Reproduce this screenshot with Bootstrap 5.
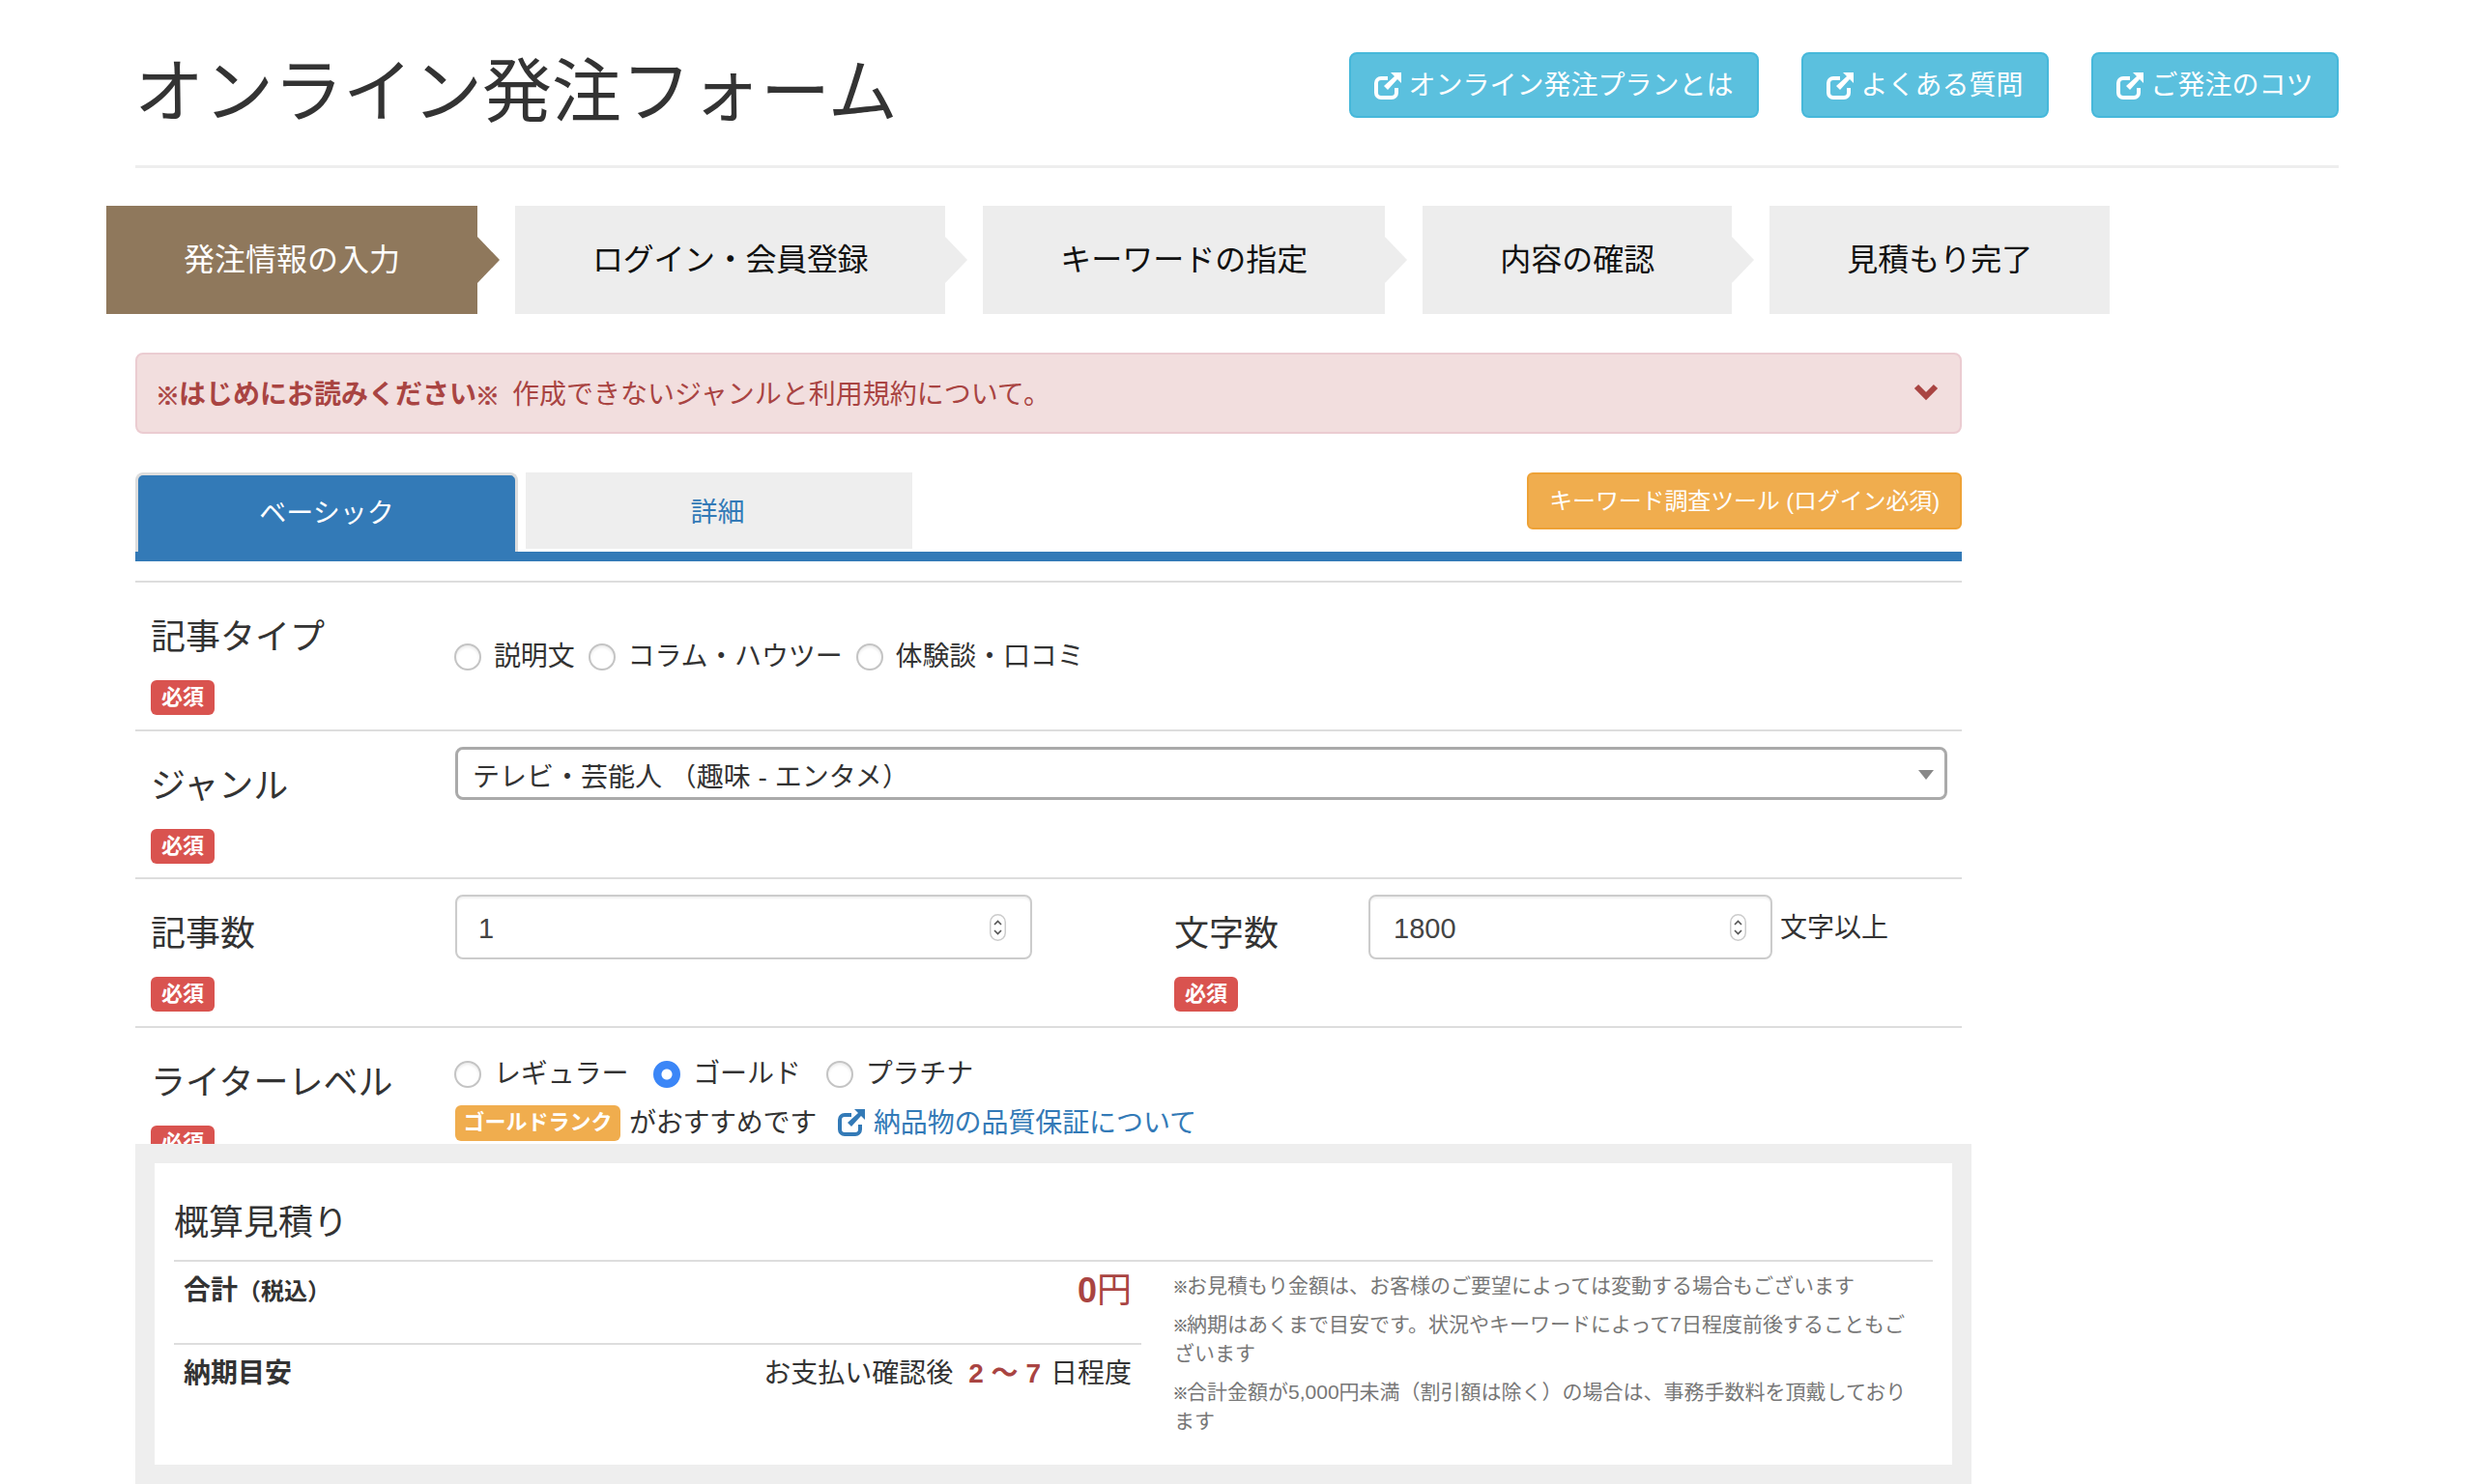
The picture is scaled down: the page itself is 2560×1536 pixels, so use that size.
<!DOCTYPE html>
<html lang="ja">
<head>
<meta charset="utf-8">
<title>オンライン発注フォーム</title>
<link rel="stylesheet" href="https://cdn.jsdelivr.net/npm/bootstrap@5.3.0/dist/css/bootstrap.min.css">
<style>
html,body{margin:0;background:#fff;}
body{font-family:"Liberation Sans","Noto Sans CJK JP",sans-serif;font-size:28px;color:#333;line-height:40px;overflow:hidden;height:1536px;}
.topzone{height:1184px;overflow:hidden;}
.wrapx{margin-left:140px;width:2280px;}
.headbar{height:174px;border-bottom:3px solid #eee;}
.ttl{font-size:72px;font-weight:400;line-height:80px;margin:49px 0 0 -1px;color:#333;letter-spacing:0;font-family:"Noto Sans CJK JP",sans-serif;}
.hbtns{margin-top:54px;gap:44px;}
.infobtn{background:#5bc0de;border:2px solid #46b8da;border-radius:8px;color:#fff;font-size:28px;height:68px;padding:2px 24.5px 0;gap:7px;line-height:1;}
.infobtn:hover{background:#5bc0de;color:#fff;border-color:#46b8da;}
.ico{width:28px;height:28px;flex:none;}
.steps{margin:39px 0 0 -30px;gap:39px;height:112px;list-style:none;padding:0;}
.stp{position:relative;background:#ededed;color:#111;font-size:32px;height:112px;padding:0 80px;line-height:1;white-space:nowrap;}
.stp.tight{letter-spacing:-.3px;}
.stp:not(:last-child)::after{content:"";position:absolute;left:100%;top:32px;border-top:24px solid transparent;border-bottom:24px solid transparent;border-left:23px solid #ededed;}
.stp.on{background:#8f785c;color:#fff;}
.stp.on::after{border-left-color:#8f785c;}
.maincol{width:1890px;}
.notice{margin:40px 0 0;height:84px;padding:4px 22px 0 20px;background:#f2dede;border:2px solid #ebccd1;border-radius:8px;color:#a94442;line-height:1;}
.notice b{font-weight:700;margin-right:14px;white-space:nowrap;}
.notice svg{margin-top:-6px;}
.kome{font-family:"Noto Sans CJK JP",sans-serif;font-size:25px;line-height:0;margin:0 -1px;vertical-align:-1px;-webkit-text-stroke:.7px currentColor;}
.estn .kome{font-size:16px;font-weight:700;margin:0 -1.5px;vertical-align:0;-webkit-text-stroke:.3px currentColor;color:#666;}
.tabbar{margin-top:40px;height:92px;border-bottom:10px solid #337ab7;position:relative;}
.tabbar .nav-item{margin-right:8px;}
.tabbar .nav-link{display:flex;align-items:center;justify-content:center;font-size:28px;line-height:1;border-radius:0;}
.tb1 .nav-link{width:396px;height:82px;background:#337ab7;color:#fff;border:3px solid #ddd;border-bottom:0;border-radius:8px 8px 0 0;}
.tb2 .nav-link{width:400px;height:79px;background:#eee;color:#337ab7;padding:5px 3px 0 0;}
.kwbtn{margin-left:auto;height:59px;background:#f0ad4e;border:2px solid #eea236;border-radius:6px;color:#fff;font-size:24px;padding:0 21px;line-height:1;letter-spacing:-.15px;}
.kwbtn:hover{background:#f0ad4e;color:#fff;border-color:#eea236;}
.fldrow{border-top:2px solid #ddd;height:153.5px;}
.fldrow.first{margin-top:20px;}
.fldhead{width:331px;padding-left:16px;flex:none;}
.fldname{font-size:36px;line-height:36px;margin-top:39px;color:#333;}
.req{display:inline-flex;align-items:center;justify-content:center;width:66px;height:36px;background:#d9534f;color:#fff;font-size:22px;font-weight:700;border-radius:6px;margin-top:26px;line-height:1;}
.fldbody{flex:1;min-width:0;}
.radset{height:28px;line-height:28px;color:#333;margin:63px 0 0 -1px;letter-spacing:-.15px;}
.radset.low{margin-top:34px;}
.rdo{width:28px;height:28px;margin:0 13px 0 0;border:2px solid #c4c4c4;box-shadow:inset 0 2px 3px rgba(0,0,0,.08);flex:none;}
.rdo:checked{background-color:#3b86f7;border-color:#3b86f7;background-image:radial-gradient(circle,#fff 0,#fff 5px,transparent 6px);box-shadow:none;}
.rdo:focus{box-shadow:none;}
.opt{margin-right:14px;white-space:nowrap;}
.opt.wide{margin-right:26px;}
.picker{width:1544px;height:55px;margin-top:16px;border:3px solid #aaa;border-radius:8px;font-size:28px;line-height:1;padding:9px 0 0 15px;color:#333;font-family:inherit;background-image:url("data:image/svg+xml,%3Csvg xmlns='http://www.w3.org/2000/svg' width='16' height='12'%3E%3Cpath d='M0 1h16L8 11z' fill='%23888'/%3E%3C/svg%3E");background-size:16px 12px;background-position:right 11px top 20px;}
.numbox{height:67px;margin-top:16px;border:2px solid #ccc;border-radius:8px;background:#fff;padding:0 25px 0 24px;box-shadow:inset 0 2px 2px rgba(0,0,0,.06);}
.numbox input{border:0;outline:0;flex:1;min-width:0;font-size:29px;color:#444;background:transparent;padding:3px 0 0;font-family:inherit;}
.nb1{width:597px;padding-left:22px;}
.nb2{width:418px;}
.stepper{width:17px;height:28px;flex:none;}
.f2head{width:201px;margin-left:147px;flex:none;padding-left:0;}
.unit{margin:16px 0 0 8px;line-height:70px;}
.goldtag{display:inline-flex;align-items:center;justify-content:center;width:171px;height:37px;background:#f0ad4e;color:#fff;font-size:22px;font-weight:700;border-radius:6px;line-height:1;margin-right:9px;letter-spacing:0;}
.reco{margin-top:18px;line-height:37px;white-space:nowrap;letter-spacing:-.3px;}
.alnk{color:#337ab7;text-decoration:none;margin-left:22px;gap:9px;letter-spacing:-.1px;}
.estbar{margin-left:140px;width:1900px;height:352px;background:#eee;padding:20px;}
.estin{background:#fff;height:312px;padding:0 20px 0 20px;}
.esttitle{font-size:36px;line-height:36px;font-weight:400;margin:0;padding:44px 0 20px;border-bottom:2px solid #ddd;color:#333;}
.estl{width:1001px;flex:none;}
.estrow{padding:10px 10px 0;height:84px;}
.estrow+.estrow{border-top:2px solid #ddd;}
.estrow b{font-weight:700;}
.taxn{font-size:24px;font-weight:700;}
.sum0{font-size:36px;color:#a94442;line-height:40px;}
.redn{color:#a94442;font-weight:700;margin:0 10px 0 16px;}
.estn{margin-left:34px;width:770px;padding-top:10px;font-size:21px;line-height:30px;color:#777;}
.estn p{margin:0 0 10px;}
</style>
</head>
<body>
<div class="topzone">
<div class="wrapx">
  <header class="headbar d-flex justify-content-between align-items-start">
    <h1 class="ttl">オンライン発注フォーム</h1>
    <div class="hbtns d-flex">
      <a class="btn infobtn d-flex align-items-center" href="#"><svg class="ico" viewBox="0 0 28 28"><path d="M14 6H7a5 5 0 0 0-5 5v10a5 5 0 0 0 5 5h11a5 5 0 0 0 5-5v-5" fill="none" stroke="#fff" stroke-width="4"/><path d="M17 0H28V11L24 7 14 18 10 14 21 4Z" fill="#fff"/></svg>オンライン発注プランとは</a>
      <a class="btn infobtn d-flex align-items-center" href="#"><svg class="ico" viewBox="0 0 28 28"><path d="M14 6H7a5 5 0 0 0-5 5v10a5 5 0 0 0 5 5h11a5 5 0 0 0 5-5v-5" fill="none" stroke="#fff" stroke-width="4"/><path d="M17 0H28V11L24 7 14 18 10 14 21 4Z" fill="#fff"/></svg>よくある質問</a>
      <a class="btn infobtn d-flex align-items-center" href="#"><svg class="ico" viewBox="0 0 28 28"><path d="M14 6H7a5 5 0 0 0-5 5v10a5 5 0 0 0 5 5h11a5 5 0 0 0 5-5v-5" fill="none" stroke="#fff" stroke-width="4"/><path d="M17 0H28V11L24 7 14 18 10 14 21 4Z" fill="#fff"/></svg>ご発注のコツ</a>
    </div>
  </header>
  <ol class="steps d-flex">
    <li class="stp on d-flex align-items-center">発注情報の入力</li>
    <li class="stp tight d-flex align-items-center">ログイン・会員登録</li>
    <li class="stp d-flex align-items-center">キーワードの指定</li>
    <li class="stp d-flex align-items-center">内容の確認</li>
    <li class="stp d-flex align-items-center">見積もり完了</li>
  </ol>
  <div class="maincol">
    <div class="notice d-flex align-items-center"><b><span class="kome">※</span>はじめにお読みください<span class="kome">※</span></b><span>作成できないジャンルと利用規約について。</span>
      <svg class="ms-auto" width="26" height="18" viewBox="0 0 26 18"><path d="M3 3L13 13 23 3" fill="none" stroke="#a94442" stroke-width="6"/></svg></div>
    <ul class="nav tabbar align-items-start">
      <li class="nav-item tb1"><a class="nav-link" href="#">ベーシック</a></li>
      <li class="nav-item tb2"><a class="nav-link" href="#">詳細</a></li>
      <li class="ms-auto"><a class="btn kwbtn d-flex align-items-center" href="#">キーワード調査ツール (ログイン必須)</a></li>
    </ul>
    <div class="fldrow first d-flex">
      <div class="fldhead"><div class="fldname">記事タイプ</div><span class="req">必須</span></div>
      <div class="fldbody"><div class="radset d-flex align-items-center">
        <input class="form-check-input rdo" type="radio" name="a"><span class="opt">説明文</span>
        <input class="form-check-input rdo" type="radio" name="a"><span class="opt">コラム・ハウツー</span>
        <input class="form-check-input rdo" type="radio" name="a"><span class="opt">体験談・口コミ</span>
      </div></div>
    </div>
    <div class="fldrow d-flex">
      <div class="fldhead"><div class="fldname">ジャンル</div><span class="req">必須</span></div>
      <div class="fldbody"><select class="form-select picker"><option>テレビ・芸能人 （趣味 - エンタメ）</option></select></div>
    </div>
    <div class="fldrow d-flex">
      <div class="fldhead"><div class="fldname">記事数</div><span class="req">必須</span></div>
      <div class="numbox nb1 d-flex align-items-center"><input type="text" value="1" aria-label="記事数"><svg class="stepper" viewBox="0 0 17 28"><rect x=".75" y=".75" width="15.5" height="26.5" rx="7.7" fill="#fff" stroke="#ccc" stroke-width="1.5"/><path d="M5 11l3.5-3.5L12 11M5 17l3.5 3.5L12 17" fill="none" stroke="#555" stroke-width="1.6"/></svg></div>
      <div class="f2head"><div class="fldname">文字数</div><span class="req">必須</span></div>
      <div class="numbox nb2 d-flex align-items-center"><input type="text" value="1800" aria-label="文字数"><svg class="stepper" viewBox="0 0 17 28"><rect x=".75" y=".75" width="15.5" height="26.5" rx="7.7" fill="#fff" stroke="#ccc" stroke-width="1.5"/><path d="M5 11l3.5-3.5L12 11M5 17l3.5 3.5L12 17" fill="none" stroke="#555" stroke-width="1.6"/></svg></div>
      <div class="unit">文字以上</div>
    </div>
    <div class="fldrow d-flex">
      <div class="fldhead"><div class="fldname">ライターレベル</div><span class="req">必須</span></div>
      <div class="fldbody">
        <div class="radset low d-flex align-items-center">
          <input class="form-check-input rdo" type="radio" name="b"><span class="opt wide">レギュラー</span>
          <input class="form-check-input rdo" type="radio" name="b" checked><span class="opt wide">ゴールド</span>
          <input class="form-check-input rdo" type="radio" name="b"><span class="opt">プラチナ</span>
        </div>
        <div class="reco d-flex align-items-center"><span class="goldtag">ゴールドランク</span>がおすすめです<a class="alnk d-inline-flex align-items-center" href="#"><svg class="ico" viewBox="0 0 28 28"><path d="M14 6H7a5 5 0 0 0-5 5v10a5 5 0 0 0 5 5h11a5 5 0 0 0 5-5v-5" fill="none" stroke="#337ab7" stroke-width="4"/><path d="M17 0H28V11L24 7 14 18 10 14 21 4Z" fill="#337ab7" stroke="none"/></svg>納品物の品質保証について</a></div>
      </div>
    </div>
  </div>
</div>
</div>
<section class="estbar">
  <div class="estin">
    <h2 class="esttitle">概算見積り</h2>
    <div class="d-flex">
      <div class="estl">
        <div class="estrow d-flex justify-content-between align-items-start"><span><b>合計</b><span class="taxn">（税込）</span></span><span class="sum0"><b>0</b>円</span></div>
        <div class="estrow d-flex justify-content-between align-items-start"><b>納期目安</b><span>お支払い確認後<span class="redn">2 〜 7</span>日程度</span></div>
      </div>
      <div class="estn">
        <p><span class="kome">※</span>お見積もり金額は、お客様のご要望によっては変動する場合もございます</p>
        <p><span class="kome">※</span>納期はあくまで目安です。状況やキーワードによって7日程度前後することもございます</p>
        <p><span class="kome">※</span>合計金額が5,000円未満（割引額は除く）の場合は、事務手数料を頂戴しております</p>
      </div>
    </div>
  </div>
</section>
<script src="https://cdn.jsdelivr.net/npm/bootstrap@5.3.0/dist/js/bootstrap.bundle.min.js"></script>
</body>
</html>
